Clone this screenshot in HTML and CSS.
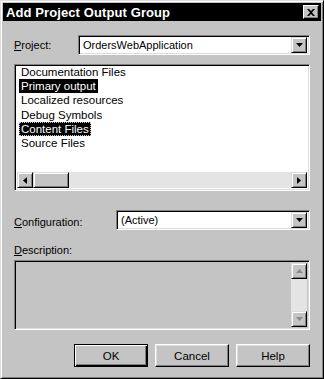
FILE: index.html
```html
<!DOCTYPE html>
<html lang="en">

<head>
    <meta charset="UTF-8">
    <meta name="viewport" content="width=device-width, initial-scale=1.0">
    <title>Add Project Output Group</title>
    <link rel="stylesheet" href="styles.css">
</head>

<body>
    <div class="window">
        <div class="titlebar">
            <span class="title">Add Project Output Group</span>
            <button class="close-btn">
                <svg width="8" height="7" viewBox="0 0 8 7">
                    <path d="M0 0h2l2 2 2-2h2L5 3.5 8 7H6L4 5 2 7H0l3-3.5z" fill="#000" />
                </svg>
            </button>
        </div>

        <div class="content">
            <div class="field-row project-row">
                <label class="label project-label"><u>P</u>roject:</label>
                <div class="combo">
                    <span class="combo-text">OrdersWebApplication</span>
                    <span class="arrow-btn">
                        <svg width="7" height="4" viewBox="0 0 7 4"><path d="M0 0h7L3.5 4z" fill="#000" /></svg>
                    </span>
                </div>
            </div>

            <div class="listbox">
                <ul class="list-items">
                    <li><span>Documentation Files</span></li>
                    <li><span class="selected">Primary output</span></li>
                    <li><span>Localized resources</span></li>
                    <li><span>Debug Symbols</span></li>
                    <li><span class="selected focused">Content Files</span></li>
                    <li><span>Source Files</span></li>
                </ul>
                <div class="hscroll">
                    <span class="arrow-btn">
                        <svg width="4" height="7" viewBox="0 0 4 7"><path d="M4 0v7L0 3.5z" fill="#000" /></svg>
                    </span>
                    <span class="hthumb"></span>
                    <span class="track"></span>
                    <span class="arrow-btn">
                        <svg width="4" height="7" viewBox="0 0 4 7"><path d="M0 0v7l4-3.5z" fill="#000" /></svg>
                    </span>
                </div>
            </div>

            <div class="field-row config-row">
                <label class="label config-label"><u>C</u>onfiguration:</label>
                <div class="combo">
                    <span class="combo-text">(Active)</span>
                    <span class="arrow-btn">
                        <svg width="7" height="4" viewBox="0 0 7 4"><path d="M0 0h7L3.5 4z" fill="#000" /></svg>
                    </span>
                </div>
            </div>

            <label class="label desc-label"><u>D</u>escription:</label>
            <div class="descbox">
                <div class="desc-text"></div>
                <div class="vscroll">
                    <span class="arrow-btn">
                        <svg width="7" height="4" viewBox="0 0 7 4"><path d="M0 4h7L3.5 0z" fill="#8a8a8a" /></svg>
                    </span>
                    <span class="track"></span>
                    <span class="arrow-btn">
                        <svg width="7" height="4" viewBox="0 0 7 4"><path d="M0 0h7L3.5 4z" fill="#8a8a8a" /></svg>
                    </span>
                </div>
            </div>

            <div class="buttons">
                <button class="btn default">OK</button>
                <button class="btn">Cancel</button>
                <button class="btn">Help</button>
            </div>
        </div>
    </div>
</body>

</html>
```

FILE: styles.css
```css
body {
    margin: 0;
    font-family: "Liberation Sans", Arial, sans-serif;
    font-size: 11px;
    color: #000;
    background-color: #c4c4c4;
}

.window {
    width: 324px;
    height: 379px;
    box-sizing: border-box;
    background-color: #c4c4c4;
    border: 1px solid;
    border-color: #dcdcdc #000 #000 #dcdcdc;
    box-shadow: inset 1px 1px #fff, inset -1px -1px #808080;
    padding: 2px;
    display: flex;
    flex-direction: column;
}

.titlebar {
    height: 18px;
    background-color: #000;
    color: #fff;
    display: flex;
    align-items: center;
    justify-content: space-between;
    padding: 0 2px 0 3px;
}

.title {
    font-weight: bold;
    font-size: 13px;
    letter-spacing: 0.1px;
}

.close-btn {
    width: 16px;
    height: 14px;
    padding: 0;
    background-color: #c4c4c4;
    border: 1px solid;
    border-color: #fff #000 #000 #fff;
    box-shadow: inset -1px -1px #808080;
    display: flex;
    align-items: center;
    justify-content: center;
}

.content {
    padding: 14px 11px 0 11px;
    display: flex;
    flex-direction: column;
}

.field-row {
    display: flex;
    align-items: center;
    height: 20px;
}

.label {
    display: block;
}

.project-label {
    width: 64px;
}

.config-label {
    width: 102px;
    padding-top: 3px;
}

.combo {
    flex: 1;
    height: 20px;
    box-sizing: border-box;
    background-color: #fff;
    border: 1px solid;
    border-color: #808080 #fff #fff #808080;
    box-shadow: inset 1px 1px #000, inset -1px -1px #dcdcdc;
    display: flex;
    align-items: center;
    padding: 2px;
}

.combo-text {
    flex: 1;
    padding-left: 2px;
}

.arrow-btn {
    width: 16px;
    height: 16px;
    box-sizing: border-box;
    background-color: #c4c4c4;
    border: 1px solid;
    border-color: #dcdcdc #000 #000 #dcdcdc;
    box-shadow: inset 1px 1px #fff, inset -1px -1px #808080;
    display: flex;
    align-items: center;
    justify-content: center;
    flex-shrink: 0;
}

.listbox {
    margin-top: 9px;
    height: 127px;
    box-sizing: border-box;
    background-color: #fff;
    border: 1px solid;
    border-color: #808080 #fff #fff #808080;
    box-shadow: inset 1px 1px #000, inset -1px -1px #dcdcdc;
    padding: 0 2px 2px 2px;
    display: flex;
    flex-direction: column;
}

.list-items {
    flex: 1;
    list-style: none;
    margin: 0;
    padding: 0 0 0 2px;
    font-size: 11.5px;
}

.list-items li {
    height: 14.2px;
    line-height: 14px;
}

.list-items span {
    padding: 0 2px;
    display: inline-block;
}

.selected {
    background-color: #000;
    color: #fff;
}

.focused {
    outline: 1px dotted #c4c4c4;
    outline-offset: -1px;
}

.hscroll {
    height: 16px;
    display: flex;
}

.hthumb {
    width: 36px;
    height: 16px;
    box-sizing: border-box;
    background-color: #c4c4c4;
    border: 1px solid;
    border-color: #dcdcdc #000 #000 #dcdcdc;
    box-shadow: inset 1px 1px #fff, inset -1px -1px #808080;
}

.track {
    flex: 1;
    background-color: #e4e4e4;
}

.config-row {
    margin-top: 19px;
}

.desc-label {
    margin-top: 13px;
    height: 14px;
    line-height: 14px;
}

.descbox {
    margin-top: 3px;
    height: 70px;
    box-sizing: border-box;
    background-color: #c4c4c4;
    border: 1px solid;
    border-color: #808080 #fff #fff #808080;
    box-shadow: inset 1px 1px #000, inset -1px -1px #dcdcdc;
    padding: 2px;
    display: flex;
}

.desc-text {
    flex: 1;
}

.vscroll {
    width: 16px;
    display: flex;
    flex-direction: column;
}

.buttons {
    margin-top: 14px;
    display: flex;
    justify-content: flex-end;
    gap: 7px;
}

.btn {
    width: 74px;
    height: 23px;
    box-sizing: border-box;
    padding: 0;
    font-family: "Liberation Sans", Arial, sans-serif;
    font-size: 11.5px;
    color: #000;
    background-color: #c4c4c4;
    border: 1px solid;
    border-color: #fff #000 #000 #fff;
    box-shadow: inset -1px -1px #808080, inset 1px 1px #dcdcdc;
}

.btn.default {
    border: 1px solid #000;
    box-shadow: inset 1px 1px #fff, inset -1px -1px #000, inset -2px -2px #808080;
}
```
